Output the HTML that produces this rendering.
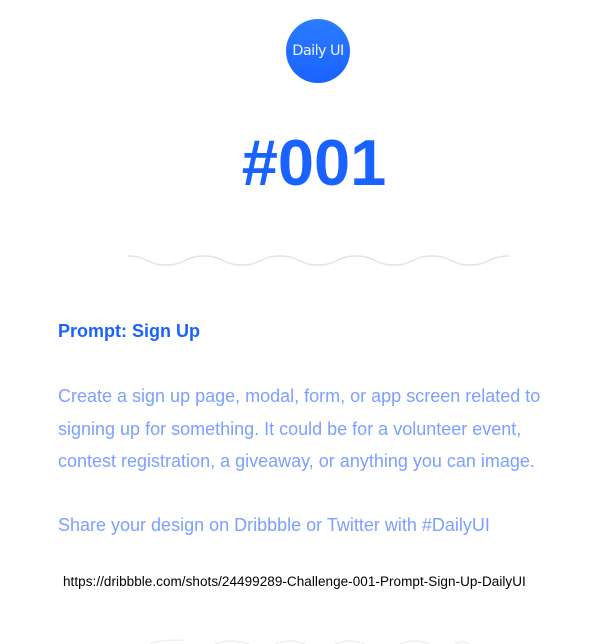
<!DOCTYPE html>
<html><head><meta charset="utf-8"><style>
html,body{margin:0;padding:0;background:#fff;width:612px;height:644px;overflow:hidden;position:relative;font-family:"Liberation Sans",Arial,sans-serif}
.logo{position:absolute;left:286px;top:19px;width:64px;height:64px;border-radius:50%;background:linear-gradient(#2b7cff,#1a62ff);color:#eef3ff;font-size:14.5px;line-height:64px;text-align:center;font-family:"DejaVu Sans",sans-serif;letter-spacing:-0.6px}
.h{position:absolute;left:0;width:628px;text-align:center;top:125px;font-size:65px;font-weight:bold;color:#1a62ff;line-height:75px}
.p{position:absolute;left:58px;top:321px;font-size:18px;font-weight:bold;color:#1a62ff}
.t{position:absolute;left:58px;top:380px;width:520px;font-size:18px;line-height:32.5px;color:#7ba0ff}
.s{position:absolute;left:58px;top:515px;font-size:18px;color:#7ba0ff}
.u{position:absolute;left:63px;top:574px;font-size:13.5px;color:#000;font-family:"Liberation Sans",sans-serif;letter-spacing:0.05px}
</style></head><body>
<div class="logo">Daily UI</div>
<div class="h">#001</div>
<svg style="position:absolute;left:0;top:0" width="612" height="644">
<path d="M128 256 C147 256 147 265 166 265 C185 265 185 256 204 256 C223 256 223 265 242 265 C261 265 261 256 280 256 C299 256 299 265 318 265 C337 265 337 256 356 256 C375 256 375 265 394 265 C413 265 413 256 432 256 C451 256 451 265 470 265 C489 265 489 256 509 256" fill="none" stroke="#e4e4e4" stroke-width="1.5"/>
<path d="M150 644 C160 640 170 640 185 640 M215 644 C225 640 235 640 250 644 M275 644 C285 640 295 640 305 644 M335 644 C345 640 355 640 365 644 M400 644 C410 640 420 640 430 644 M455 644 C460 641 465 641 470 644" fill="none" stroke="#f0f0f0" stroke-width="1.5"/>
</svg>
<div class="p">Prompt: Sign Up</div>
<div class="t">Create a sign up page, modal, form, or app screen related to signing up for something. It could be for a volunteer event, contest registration, a giveaway, or anything you can image.</div>
<div class="s">Share your design on Dribbble or Twitter with #DailyUI</div>
<div class="u">https://dribbble.com/shots/24499289-Challenge-001-Prompt-Sign-Up-DailyUI</div>
</body></html>
